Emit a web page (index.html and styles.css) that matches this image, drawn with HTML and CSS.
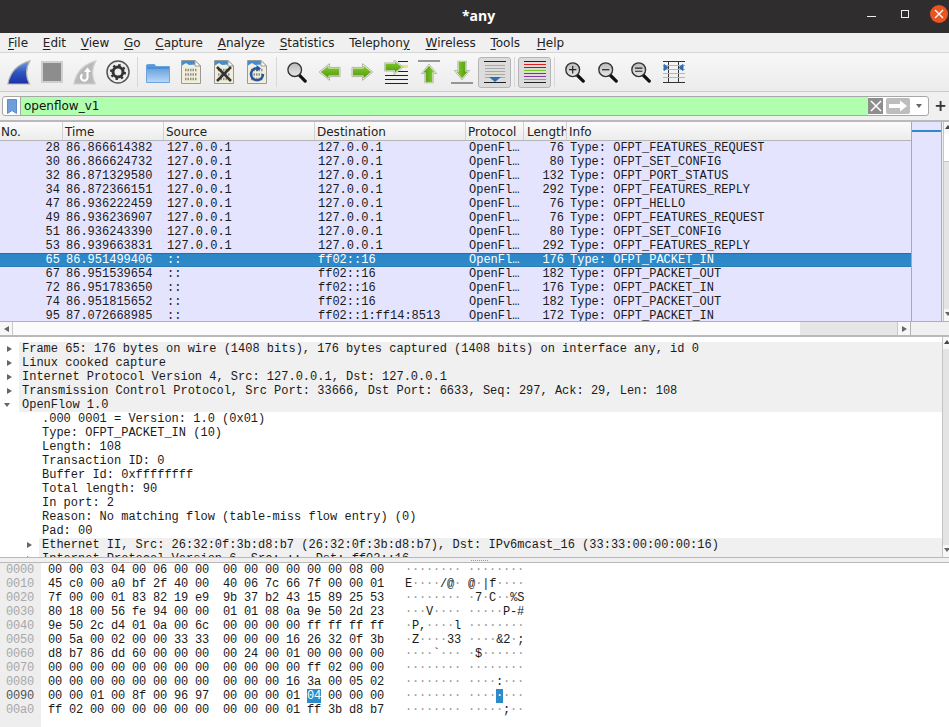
FILE: index.html
```html
<!DOCTYPE html>
<html lang="en">

<head>
    <meta charset="UTF-8">
    <meta name="viewport" content="width=device-width, initial-scale=1.0">
    <title>*any</title>
    <link rel="stylesheet" href="styles.css">
</head>

<body>
    <svg class="defs" width="0" height="0">
        <defs>
            <linearGradient id="fin" x1="0" y1="0" x2="0" y2="1">
                <stop offset="0" stop-color="#6f9fe0"/>
                <stop offset=".5" stop-color="#2f55c0"/>
                <stop offset="1" stop-color="#1c2fa8"/>
            </linearGradient>
            <linearGradient id="green" x1="0" y1="0" x2="0" y2="1">
                <stop offset="0" stop-color="#86cb32"/>
                <stop offset="1" stop-color="#4e9a06"/>
            </linearGradient>
            <linearGradient id="folder" x1="0" y1="0" x2="0" y2="1">
                <stop offset="0" stop-color="#4f93d8"/>
                <stop offset="1" stop-color="#bcd8f6"/>
            </linearGradient>
            <linearGradient id="lens" x1="0" y1="0" x2="0" y2="1">
                <stop offset="0" stop-color="#b9b9b9"/>
                <stop offset="1" stop-color="#e9e9e9"/>
            </linearGradient>
            <symbol id="doc" viewBox="0 0 20 24">
                <path d="M.5 .5H14L19.500 6V23.500H.5Z" fill="#f2eedc" stroke="#9a9a92"/>
                <path d="M1 1H14V4.500L8 5 5 3 1 5.500Z" fill="#3f8fd8"/>
                <path d="M14 .5V6H19.500Z" fill="#fff" stroke="#9a9a92"/>
                <path d="M4 10H16M4 14.500H16M4 19H16" stroke="#8f8f82" stroke-width="2.500" stroke-dasharray="1.500 1"/>
            </symbol>
            <symbol id="glass" viewBox="0 0 22 24">
                <path d="M13 15L20 22" stroke="#111" stroke-width="3.500" stroke-linecap="round"/>
                <circle cx="8.500" cy="9.500" r="7.500" fill="url(#lens)" stroke="#333" stroke-width="1.500"/>
            </symbol>
            <symbol id="arrow" viewBox="0 0 22 18">
                <path d="M.6 9L11 .6V4.400H21.500V13.600H11V17.400Z" fill="#f0f0ea" stroke="#b4b4aa" stroke-width="1" stroke-linejoin="round"/>
                <path d="M2.400 9L10 2.800V5.400H20.500V12.600H10V15.200Z" fill="url(#green)"/>
            </symbol>
        </defs>
    </svg>

    <div class="app">
        <header class="titlebar">
            <span class="title">*any</span>
            <span class="win-min"></span>
            <span class="win-max"></span>
            <span class="win-close">
                <svg width="10" height="10" viewBox="0 0 10 10"><path d="M1 1L9 9M9 1L1 9" stroke="#fff" stroke-width="1.300"/></svg>
            </span>
        </header>

        <nav class="menubar">
            <span class="menu-item"><u>F</u>ile</span>
            <span class="menu-item"><u>E</u>dit</span>
            <span class="menu-item"><u>V</u>iew</span>
            <span class="menu-item"><u>G</u>o</span>
            <span class="menu-item"><u>C</u>apture</span>
            <span class="menu-item"><u>A</u>nalyze</span>
            <span class="menu-item"><u>S</u>tatistics</span>
            <span class="menu-item">Telephon<u>y</u></span>
            <span class="menu-item menu-wireless"><u>W</u>ireless</span>
            <span class="menu-item"><u>T</u>ools</span>
            <span class="menu-item menu-help"><u>H</u>elp</span>
        </nav>

        <div class="toolbar">
            <span class="tool">
                <svg width="24" height="25" viewBox="0 0 24 25"><path d="M.8 24C3 12 11 4 23 .8C18.500 8 18.500 17 22.500 24Z" fill="url(#fin)" stroke="#b5b5ae" stroke-width="1.200"/></svg>
            </span>
            <span class="tool">
                <svg width="22" height="22" viewBox="0 0 22 22"><rect x="1" y="1" width="20" height="20" fill="#8d8d8d" stroke="#cfcfcf" stroke-width="2"/></svg>
            </span>
            <span class="tool">
                <svg width="24" height="25" viewBox="0 0 24 25">
                    <path d="M.8 24C3 12 11 4 23 .8C18.500 8 18.500 17 22.500 24Z" fill="#b9b9b9" stroke="#d2d2d2" stroke-width="1.200"/>
                    <path d="M14.500 11V17.500A3.300 3.300 0 1 1 9.500 14.500" fill="none" stroke="#fff" stroke-width="2.200"/>
                    <path d="M11 12H18L14.500 7.500Z" fill="#fff"/>
                </svg>
            </span>
            <span class="tool">
                <svg width="24" height="24" viewBox="0 0 24 24">
                    <circle cx="12" cy="12" r="11" fill="#eee" stroke="#555" stroke-width="1.500"/>
                    <circle cx="12" cy="12" r="5" fill="none" stroke="#333" stroke-width="3"/>
                    <circle cx="12" cy="12" r="7" fill="none" stroke="#333" stroke-width="2" stroke-dasharray="2.500 3"/>
                </svg>
            </span>
            <span class="tool-sep"></span>
            <span class="tool">
                <svg width="24" height="21" viewBox="0 0 24 21">
                    <path d="M.5 3V20.500H23.500V4.500H10L8.500 2.500H2Z" fill="url(#folder)" stroke="#6aa4de"/>
                    <path d="M1 6H23" stroke="#3b7cc4"/>
                </svg>
            </span>
            <span class="tool"><svg width="20" height="24"><use href="#doc"/></svg></span>
            <span class="tool">
                <svg width="20" height="24" viewBox="0 0 20 24">
                    <use href="#doc" width="20" height="24"/>
                    <path d="M3 7L17 21M17 7L3 21" stroke="#333" stroke-width="2.500"/>
                </svg>
            </span>
            <span class="tool">
                <svg width="20" height="24" viewBox="0 0 20 24">
                    <use href="#doc" width="20" height="24"/>
                    <path d="M12 8.500A6 6 0 1 0 16 14" fill="none" stroke="#2456a4" stroke-width="2.500"/>
                    <path d="M9.500 5L14 8.500 9.500 11.500Z" fill="#2456a4"/>
                </svg>
            </span>
            <span class="tool-sep"></span>
            <span class="tool"><svg width="20" height="24"><use href="#glass"/></svg></span>
            <span class="tool"><svg width="23" height="18"><use href="#arrow"/></svg></span>
            <span class="tool"><svg class="flip-x" width="23" height="18"><use href="#arrow"/></svg></span>
            <span class="tool">
                <svg width="24" height="24" viewBox="0 0 24 24">
                    <path d="M14 1.500H24M14 11.500H24M1 15.500H24M1 19.500H24M1 23.500H24" stroke="#222"/>
                    <rect x="17" y="5" width="7" height="3" fill="#f3e35f"/>
                    <g transform="translate(20 -1) scale(-1 1)"><use href="#arrow" width="20" height="16"/></g>
                </svg>
            </span>
            <span class="tool">
                <svg width="22" height="24" viewBox="0 0 22 24">
                    <path d="M0 1H22" stroke="#777" stroke-width="1.500"/>
                    <g transform="translate(20 3.500) rotate(90)"><use href="#arrow" width="20" height="18"/></g>
                </svg>
            </span>
            <span class="tool">
                <svg width="22" height="24" viewBox="0 0 22 24">
                    <path d="M0 23H22" stroke="#777" stroke-width="1.500"/>
                    <g transform="translate(2 20.500) rotate(-90)"><use href="#arrow" width="20" height="18"/></g>
                </svg>
            </span>
            <span class="tool tool-on">
                <svg width="22" height="22" viewBox="0 0 22 22">
                    <path d="M0 .5H22M0 21.500H22" stroke="#222"/>
                    <path d="M1 4.500H21M1 7.500H21M1 10.500H21M1 13.500H21M1 16.500H21" stroke="#a9a9a0"/>
                    <path d="M5 16H17L11 21Z" fill="#2f6db5"/>
                </svg>
            </span>
            <span class="tool-sep"></span>
            <span class="tool tool-on">
                <svg width="22" height="22" viewBox="0 0 22 22" fill="none">
                    <path d="M0 .5H22" stroke="#222"/>
                    <path d="M0 3.500H22" stroke="#e02020"/>
                    <path d="M0 6.500H22" stroke="#2040d0"/>
                    <path d="M0 9.500H22" stroke="#7fc520"/>
                    <path d="M0 12.500H22" stroke="#2060a0"/>
                    <path d="M0 15.500H22" stroke="#80409a"/>
                    <path d="M0 18.500H22" stroke="#c8a000"/>
                    <path d="M0 21.500H22" stroke="#222"/>
                </svg>
            </span>
            <span class="tool-sep"></span>
            <span class="tool">
                <svg width="22" height="22" viewBox="0 0 22 24">
                    <use href="#glass" width="22" height="24"/>
                    <path d="M8.500 5.500V13.500M4.500 9.500H12.500" stroke="#222" stroke-width="1.300"/>
                </svg>
            </span>
            <span class="tool">
                <svg width="22" height="22" viewBox="0 0 22 24">
                    <use href="#glass" width="22" height="24"/>
                    <path d="M4.500 9.500H12.500" stroke="#222" stroke-width="1.300"/>
                </svg>
            </span>
            <span class="tool">
                <svg width="22" height="22" viewBox="0 0 22 24">
                    <use href="#glass" width="22" height="24"/>
                    <path d="M4.500 7.800H12.500M4.500 11.200H12.500" stroke="#222" stroke-width="1.300"/>
                </svg>
            </span>
            <span class="tool">
                <svg width="22" height="22" viewBox="0 0 22 22">
                    <path d="M0 .5H22M0 21.500H22M5.500 0V22M15.500 0V22" stroke="#333"/>
                    <path d="M0 4.500H22M0 8.500H22M0 12.500H22M0 16.500H22" stroke="#b5b5ac"/>
                    <path d="M1 3.500L5 6.500 1 9.500ZM20 3.500L16 6.500 20 9.500Z" fill="#2f6db5" stroke="#2f6db5"/>
                </svg>
            </span>
        </div>

        <div class="filterbar">
            <div class="filter-box">
                <span class="filter-mark">
                    <svg width="10" height="15" viewBox="0 0 10 15"><path d="M.5 .5H9.500V14.500L5 11.500 .5 14.500Z" fill="#6f9fd8" stroke="#5c8ec9"/></svg>
                </span>
                <span class="filter-text">openflow_v1</span>
                <span class="filter-clear">
                    <svg width="12" height="12" viewBox="0 0 12 12"><path d="M1 1L11 11M11 1L1 11" stroke="#fff" stroke-width="1.600"/></svg>
                </span>
                <span class="filter-apply">
                    <svg width="20" height="12" viewBox="0 0 20 12"><path d="M1 4H12V.5L19 6 12 11.500V8H1Z" fill="#fff"/></svg>
                </span>
                <span class="filter-drop"></span>
            </div>
            <span class="filter-add">+</span>
        </div>

        <section class="packets">
            <div class="packet-main">
                <div class="packet-table">
                    <div class="packet-head">
                        <span class="col-no">No.</span>
                        <span class="col-time">Time</span>
                        <span class="col-addr">Source</span>
                        <span class="col-addr">Destination</span>
                        <span class="col-proto">Protocol</span>
                        <span class="col-len">Length</span>
                        <span class="col-info">Info</span>
                    </div>
                    <div class="packet-rows">
                        <div class="packet"><span class="col-no">28</span><span class="col-time">86.866614382</span><span class="col-addr">127.0.0.1</span><span class="col-addr">127.0.0.1</span><span class="col-proto">OpenFl…</span><span class="col-len">76</span><span class="col-info">Type: OFPT_FEATURES_REQUEST</span></div>
                        <div class="packet"><span class="col-no">30</span><span class="col-time">86.866624732</span><span class="col-addr">127.0.0.1</span><span class="col-addr">127.0.0.1</span><span class="col-proto">OpenFl…</span><span class="col-len">80</span><span class="col-info">Type: OFPT_SET_CONFIG</span></div>
                        <div class="packet"><span class="col-no">32</span><span class="col-time">86.871329580</span><span class="col-addr">127.0.0.1</span><span class="col-addr">127.0.0.1</span><span class="col-proto">OpenFl…</span><span class="col-len">132</span><span class="col-info">Type: OFPT_PORT_STATUS</span></div>
                        <div class="packet"><span class="col-no">34</span><span class="col-time">86.872366151</span><span class="col-addr">127.0.0.1</span><span class="col-addr">127.0.0.1</span><span class="col-proto">OpenFl…</span><span class="col-len">292</span><span class="col-info">Type: OFPT_FEATURES_REPLY</span></div>
                        <div class="packet"><span class="col-no">47</span><span class="col-time">86.936222459</span><span class="col-addr">127.0.0.1</span><span class="col-addr">127.0.0.1</span><span class="col-proto">OpenFl…</span><span class="col-len">76</span><span class="col-info">Type: OFPT_HELLO</span></div>
                        <div class="packet"><span class="col-no">49</span><span class="col-time">86.936236907</span><span class="col-addr">127.0.0.1</span><span class="col-addr">127.0.0.1</span><span class="col-proto">OpenFl…</span><span class="col-len">76</span><span class="col-info">Type: OFPT_FEATURES_REQUEST</span></div>
                        <div class="packet"><span class="col-no">51</span><span class="col-time">86.936243390</span><span class="col-addr">127.0.0.1</span><span class="col-addr">127.0.0.1</span><span class="col-proto">OpenFl…</span><span class="col-len">80</span><span class="col-info">Type: OFPT_SET_CONFIG</span></div>
                        <div class="packet"><span class="col-no">53</span><span class="col-time">86.939663831</span><span class="col-addr">127.0.0.1</span><span class="col-addr">127.0.0.1</span><span class="col-proto">OpenFl…</span><span class="col-len">292</span><span class="col-info">Type: OFPT_FEATURES_REPLY</span></div>
                        <div class="packet packet-sel"><span class="col-no">65</span><span class="col-time">86.951499406</span><span class="col-addr">::</span><span class="col-addr">ff02::16</span><span class="col-proto">OpenFl…</span><span class="col-len">176</span><span class="col-info">Type: OFPT_PACKET_IN</span></div>
                        <div class="packet"><span class="col-no">67</span><span class="col-time">86.951539654</span><span class="col-addr">::</span><span class="col-addr">ff02::16</span><span class="col-proto">OpenFl…</span><span class="col-len">182</span><span class="col-info">Type: OFPT_PACKET_OUT</span></div>
                        <div class="packet"><span class="col-no">72</span><span class="col-time">86.951783650</span><span class="col-addr">::</span><span class="col-addr">ff02::16</span><span class="col-proto">OpenFl…</span><span class="col-len">176</span><span class="col-info">Type: OFPT_PACKET_IN</span></div>
                        <div class="packet"><span class="col-no">74</span><span class="col-time">86.951815652</span><span class="col-addr">::</span><span class="col-addr">ff02::16</span><span class="col-proto">OpenFl…</span><span class="col-len">182</span><span class="col-info">Type: OFPT_PACKET_OUT</span></div>
                        <div class="packet"><span class="col-no">95</span><span class="col-time">87.072668985</span><span class="col-addr">::</span><span class="col-addr">ff02::1:ff14:8513</span><span class="col-proto">OpenFl…</span><span class="col-len">172</span><span class="col-info">Type: OFPT_PACKET_IN</span></div>
                    </div>
                </div>
                <div class="minimap"><span class="minimap-mark"></span></div>
                <div class="vscroll">
                    <span class="arrow-box"><span class="tri tri-up"></span></span>
                    <span class="thumb"></span>
                    <span class="trough"></span>
                    <span class="arrow-box"><span class="tri tri-down"></span></span>
                </div>
            </div>
            <div class="hscroll-row">
                <div class="hscroll">
                    <span class="harrow"><span class="tri tri-left"></span></span>
                    <span class="hthumb"></span>
                    <span class="htrough"></span>
                    <span class="harrow harrow-end"><span class="tri tri-right"></span></span>
                </div>
            </div>
        </section>

        <section class="details">
            <div class="tree">
                <div class="node top"><span class="tri tri-right"></span>Frame 65: 176 bytes on wire (1408 bits), 176 bytes captured (1408 bits) on interface any, id 0</div>
                <div class="node top"><span class="tri tri-right"></span>Linux cooked capture</div>
                <div class="node top"><span class="tri tri-right"></span>Internet Protocol Version 4, Src: 127.0.0.1, Dst: 127.0.0.1</div>
                <div class="node top"><span class="tri tri-right"></span>Transmission Control Protocol, Src Port: 33666, Dst Port: 6633, Seq: 297, Ack: 29, Len: 108</div>
                <div class="node top"><span class="tri tri-down"></span>OpenFlow 1.0</div>
                <div class="node leaf">.000 0001 = Version: 1.0 (0x01)</div>
                <div class="node leaf">Type: OFPT_PACKET_IN (10)</div>
                <div class="node leaf">Length: 108</div>
                <div class="node leaf">Transaction ID: 0</div>
                <div class="node leaf">Buffer Id: 0xffffffff</div>
                <div class="node leaf">Total length: 90</div>
                <div class="node leaf">In port: 2</div>
                <div class="node leaf">Reason: No matching flow (table-miss flow entry) (0)</div>
                <div class="node leaf">Pad: 00</div>
                <div class="node sub"><span class="tri tri-right"></span>Ethernet II, Src: 26:32:0f:3b:d8:b7 (26:32:0f:3b:d8:b7), Dst: IPv6mcast_16 (33:33:00:00:00:16)</div>
                <div class="node sub"><span class="tri tri-right"></span>Internet Protocol Version 6, Src: ::, Dst: ff02::16</div>
            </div>
            <div class="vscroll details-scroll">
                <span class="arrow-box"><span class="tri tri-up"></span></span>
                <span class="trough"></span>
                <span class="arrow-box"><span class="tri tri-down"></span></span>
            </div>
        </section>

        <div class="splitter"><span class="grip"></span></div>

        <section class="bytes">
            <div class="offsets">
                <div>0000</div>
                <div>0010</div>
                <div>0020</div>
                <div>0030</div>
                <div>0040</div>
                <div>0050</div>
                <div>0060</div>
                <div>0070</div>
                <div>0080</div>
                <div class="offset-on">0090</div>
                <div>00a0</div>
            </div>
            <div class="dump">
                <div>00 00 03 04 00 06 00 00  00 00 00 00 00 00 08 00   <i>········ ········</i></div>
                <div>45 c0 00 a0 bf 2f 40 00  40 06 7c 66 7f 00 00 01   E<i>····</i>/@<i>·</i> @<i>·</i>|f<i>····</i></div>
                <div>7f 00 00 01 83 82 19 e9  9b 37 b2 43 15 89 25 53   <i>········ ·</i>7<i>·</i>C<i>··</i>%S</div>
                <div>80 18 00 56 fe 94 00 00  01 01 08 0a 9e 50 2d 23   <i>···</i>V<i>···· ·····</i>P-#</div>
                <div>9e 50 2c d4 01 0a 00 6c  00 00 00 00 ff ff ff ff   <i>·</i>P,<i>····</i>l <i>········</i></div>
                <div>00 5a 00 02 00 00 33 33  00 00 00 16 26 32 0f 3b   <i>·</i>Z<i>····</i>33 <i>····</i>&amp;2<i>·</i>;</div>
                <div>d8 b7 86 dd 60 00 00 00  00 24 00 01 00 00 00 00   <i>····</i>`<i>··· ·</i>$<i>······</i></div>
                <div>00 00 00 00 00 00 00 00  00 00 00 00 ff 02 00 00   <i>········ ········</i></div>
                <div>00 00 00 00 00 00 00 00  00 00 00 16 3a 00 05 02   <i>········ ····</i>:<i>···</i></div>
                <div>00 00 01 00 8f 00 96 97  00 00 00 01 <b>04</b> 00 00 00   <i>········ ····</i><b>·</b><i>···</i></div>
                <div>ff 02 00 00 00 00 00 00  00 00 00 01 ff 3b d8 b7   <i>········ ·····</i>;<i>··</i></div>
            </div>
        </section>
    </div>
</body>

</html>
```

FILE: styles.css
```css
* {
    box-sizing: border-box;
}

body {
    margin: 0;
    background: #f0f0f0;
    overflow: hidden;
}

.defs {
    position: absolute;
}

.app {
    width: 949px;
    height: 727px;
    display: flex;
    flex-direction: column;
    overflow: hidden;
    font-family: "DejaVu Sans", sans-serif;
    font-size: 12px;
    color: #222;
}

.titlebar {
    height: 33px;
    flex: none;
    position: relative;
    background: #2f2d2d;
    color: #fff;
    display: flex;
    align-items: center;
    justify-content: center;
}

.title {
    font-family: "Open Sans", sans-serif;
    font-size: 14px;
    font-weight: 700;
    margin-left: 8px;
    margin-bottom: 3px;
}

.win-min {
    position: absolute;
    left: 867px;
    top: 16px;
    width: 9px;
    height: 1px;
    background: #eee;
}

.win-max {
    position: absolute;
    left: 901px;
    top: 10px;
    width: 8px;
    height: 8px;
    border: 1px solid #eee;
}

.win-close {
    position: absolute;
    left: 930px;
    top: 5px;
    width: 18px;
    height: 18px;
    border-radius: 50%;
    background: #e95420;
    display: flex;
    align-items: center;
    justify-content: center;
}

.menubar {
    height: 20px;
    flex: none;
    display: flex;
    align-items: center;
    gap: 14.700px;
    padding-left: 8px;
    background: #f0f0f0;
    border-bottom: 1px solid #d6d6d6;
}

.menu-item u {
    text-underline-offset: 2px;
}

.menu-wireless {
    margin-left: 1px;
}

.menu-help {
    margin-left: 2px;
}

.toolbar {
    height: 39px;
    flex: none;
    display: flex;
    align-items: center;
    padding-left: 2px;
    background: linear-gradient(#f7f7f7, #ececec);
    border-bottom: 1px solid #c9c9c9;
}

.tool {
    width: 33px;
    height: 31px;
    flex: none;
    display: flex;
    align-items: center;
    justify-content: center;
}

.tool-on {
    background: #dcdcdc;
    border: 1px solid #b5b5b5;
    border-radius: 3px;
}

.flip-x {
    transform: scaleX(-1);
}

.tool-sep {
    width: 7px;
    height: 30px;
    flex: none;
    position: relative;
}

.tool-sep::after {
    content: "";
    position: absolute;
    left: 3px;
    top: 0;
    width: 1px;
    height: 100%;
    background: #d8d8d8;
}

.filterbar {
    height: 30px;
    flex: none;
    display: flex;
    align-items: center;
    padding-left: 2px;
    background: #f0f0f0;
    border-bottom: 2px solid #b9b9b9;
}

.filter-box {
    width: 927px;
    height: 20px;
    display: flex;
    align-items: stretch;
    border: 1px solid #a8a8a8;
    border-radius: 3px;
    background: #fff;
    overflow: hidden;
}

.filter-mark {
    width: 18px;
    flex: none;
    display: flex;
    align-items: center;
    justify-content: center;
    border-right: 1px solid #a8a8a8;
}

.filter-text {
    flex: 1;
    background: #afffaf;
    color: #111;
    padding-left: 3px;
    line-height: 18px;
}

.filter-clear {
    width: 15px;
    flex: none;
    margin: 1px 0;
    background: #8e8e8e;
    display: flex;
    align-items: center;
    justify-content: center;
}

.filter-apply {
    width: 24px;
    flex: none;
    margin: 1px 0 1px 3px;
    background: #bdbdbd;
    border-radius: 2px;
    display: flex;
    align-items: center;
    justify-content: center;
}

.filter-drop {
    width: 18px;
    flex: none;
    position: relative;
}

.filter-drop::after {
    content: "";
    position: absolute;
    left: 6px;
    top: 7px;
    border: 3.500px solid transparent;
    border-top: 4px solid #666;
    border-bottom: 0;
}

.filter-add {
    flex: 1;
    text-align: center;
    font-size: 15px;
    font-weight: 700;
    color: #333;
    padding-left: 3px;
}

.packets {
    height: 215px;
    flex: none;
    display: flex;
    flex-direction: column;
    border-bottom: 2px solid #b9b9b9;
}

.packet-main {
    height: 200px;
    flex: none;
    display: flex;
    border-bottom: 1px solid #b0b0b0;
}

.packet-table {
    width: 911px;
    flex: none;
    display: flex;
    flex-direction: column;
    overflow: hidden;
}

.packet-head {
    height: 19px;
    flex: none;
    display: flex;
    background: linear-gradient(#fbfbfb, #ececec);
    border-bottom: 1px solid #b5b5b5;
    line-height: 20px;
}

.packet-head span {
    border-right: 1px solid #d2d2d2;
    padding: 0 0 0 2px;
    text-align: left;
}

.packet-head .col-no {
    padding-left: 1px;
}

.packet-head .col-len {
    padding-left: 3px;
}

.packet-head .col-info {
    border-right: 0;
}

.packet-rows {
    flex: 1;
    background: #e4e4ff;
    font-family: "Liberation Mono", monospace;
    color: #1a1a1a;
    overflow: hidden;
}

.packet {
    height: 14px;
    line-height: 14px;
    display: flex;
    white-space: pre;
}

.packet-rows .col-time {
    padding-left: 3px;
}

.packet-rows .col-addr,
.packet-rows .col-proto,
.packet-rows .col-info {
    padding-left: 3px;
}

.packet-sel {
    background: linear-gradient(#2b85c6, #2f8bca);
    box-shadow: inset 0 1px #246fa8, inset 0 -1px #2a7bb8;
    color: #fff;
}

.col-no {
    width: 63px;
    flex: none;
    text-align: right;
    padding-right: 3px;
}

.col-time {
    width: 101px;
    flex: none;
}

.col-addr {
    width: 151px;
    flex: none;
    overflow: hidden;
}

.col-proto {
    width: 58px;
    flex: none;
    overflow: hidden;
}

.col-len {
    width: 43px;
    flex: none;
    text-align: right;
    padding-right: 3px;
    overflow: hidden;
    white-space: nowrap;
}

.col-info {
    flex: 1;
}

.minimap {
    width: 31px;
    flex: none;
    position: relative;
    background: #e4e4ff;
    border-left: 1px solid #a9a9a9;
    border-right: 1px solid #a9a9a9;
}

.minimap-mark {
    position: absolute;
    left: 0;
    right: 0;
    top: 8px;
    height: 2px;
    background: #2e8bc9;
}

.vscroll {
    flex: 1;
    margin-left: 1px;
    display: flex;
    flex-direction: column;
    background: #e4e4e4;
    border-left: 1px solid #c4c4c4;
}

.arrow-box {
    height: 12px;
    flex: none;
    background: #f7f7f7;
    position: relative;
}

.thumb {
    height: 28px;
    flex: none;
    background: #fff;
    border-bottom: 1px solid #c4c4c4;
}

.trough {
    flex: 1;
}

.tri {
    display: block;
    width: 0;
    height: 0;
    border: 3.500px solid transparent;
}

.tri-right {
    border-left: 5px solid #666;
    border-right: 0;
}

.tri-left {
    border-right: 5px solid #666;
    border-left: 0;
}

.tri-up {
    border-bottom: 4px solid #444;
    border-top: 0;
}

.tri-down {
    border-top: 4px solid #666;
    border-bottom: 0;
}

.arrow-box .tri {
    position: absolute;
    left: 1px;
    top: 3px;
}

.hscroll-row {
    flex: 1;
    background: #f0f0f0;
}

.hscroll {
    width: 911px;
    height: 100%;
    display: flex;
    border-right: 1px solid #b0b0b0;
}

.harrow {
    width: 13px;
    flex: none;
    background: #f7f7f7;
    border-right: 1px solid #c9c9c9;
    display: flex;
    align-items: center;
    justify-content: center;
}

.harrow-end {
    border-right: 0;
    border-left: 1px solid #c9c9c9;
}

.hthumb {
    width: 787px;
    flex: none;
    background: #fbfbfb;
}

.htrough {
    flex: 1;
    background: #e6e6e6;
}

.details {
    height: 220px;
    flex: none;
    display: flex;
    background: #fff;
    font-family: "Liberation Mono", monospace;
    color: #1a1a1a;
}

.tree {
    width: 942px;
    flex: none;
    padding-top: 5px;
    overflow: hidden;
}

.node {
    height: 14px;
    line-height: 14px;
    white-space: pre;
    position: relative;
}

.node .tri {
    position: absolute;
}

.top {
    margin-left: 19px;
    padding-left: 3px;
    background: #f0f0f0;
}

.top .tri-right {
    left: -12px;
    top: 4px;
}

.top .tri-down {
    left: -15px;
    top: 5px;
}

.leaf {
    padding-left: 42px;
}

.sub {
    margin-left: 39px;
    padding-left: 3px;
    background: #f0f0f0;
}

.sub .tri-right {
    left: -12px;
    top: 4px;
}

.details-scroll {
    margin-left: 0;
}

.splitter {
    height: 6px;
    flex: none;
    background: #f0f0f0;
    border-top: 1px solid #b9b9b9;
    border-bottom: 1px solid #b9b9b9;
    display: flex;
    align-items: center;
    justify-content: center;
}

.grip {
    width: 17px;
    border-top: 1px dotted #999;
    margin-left: 10px;
}

.bytes {
    flex: 1;
    display: flex;
    font-family: "Liberation Mono", monospace;
    letter-spacing: -0.2px;
    line-height: 14px;
    color: #1a1a1a;
    overflow: hidden;
}

.offsets {
    width: 41px;
    flex: none;
    padding-left: 6px;
    background: #eeeeee;
    color: #a8a8a8;
}

.offset-on {
    color: #555;
}

.dump {
    flex: 1;
    padding-left: 7px;
    background: #fff;
}

.dump div {
    white-space: pre;
}

.dump i {
    font-style: normal;
    color: #9a9a9a;
}

.dump b {
    font-weight: 400;
    background: #2e8bc9;
    color: #fff;
}
```
